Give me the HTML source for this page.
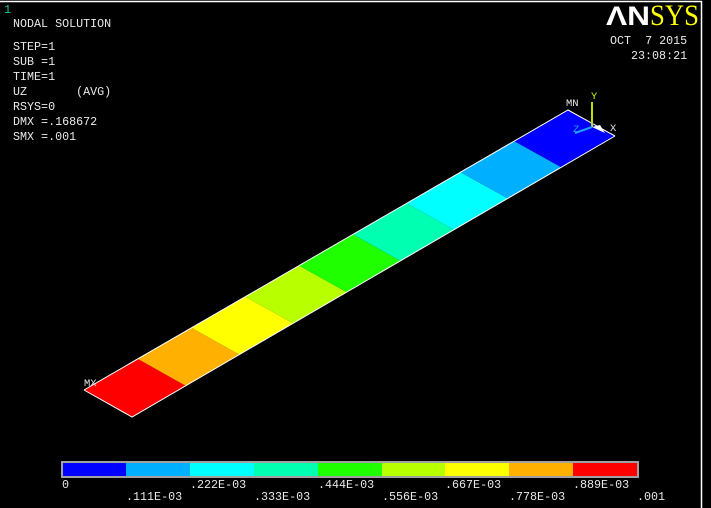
<!DOCTYPE html>
<html><head><meta charset="utf-8"><style>
html,body{margin:0;padding:0;background:#000;width:711px;height:508px;overflow:hidden}
svg text{font-family:"Liberation Mono",monospace;font-size:11.7px;fill:#e8e8e8;white-space:pre}
</style></head><body>
<svg width="711" height="508" viewBox="0 0 711 508" xml:space="preserve">
<rect width="711" height="508" fill="#000"/>
<line x1="0" y1="1.5" x2="702" y2="1.5" stroke="#fff" stroke-width="1.5"/>
<line x1="701.5" y1="1" x2="701.5" y2="508" stroke="#fff" stroke-width="1.5"/>
<text x="4" y="13" style="fill:#20c0a0;font-size:12px">1</text>
<text x="13" y="27">NODAL SOLUTION</text>
<text x="13" y="50">STEP=1</text>
<text x="13" y="65">SUB =1</text>
<text x="13" y="80">TIME=1</text>
<text x="13" y="95">UZ       (AVG)</text>
<text x="13" y="110">RSYS=0</text>
<text x="13" y="125">DMX =.168672</text>
<text x="13" y="140">SMX =.001</text>
<text x="606" y="25" textLength="44" lengthAdjust="spacingAndGlyphs" style="font-family:'Liberation Sans',sans-serif;font-weight:bold;font-size:27px;fill:#fff">ΛN</text>
<text x="650" y="25" textLength="49" lengthAdjust="spacingAndGlyphs" style="font-family:'Liberation Serif',serif;font-size:30px;fill:#ffff00">SYS</text>
<text x="610" y="44">OCT  7 2015</text>
<text x="631" y="59">23:08:21</text>
<polygon points="84,390 137.8,358.9 185.7,385.8 132,417" fill="#ff0000"/>
<polygon points="137.8,358.9 191.6,327.8 239.3,354.6 185.7,385.8" fill="#ffb000"/>
<polygon points="191.6,327.8 245.3,296.7 293,323.3 239.3,354.6" fill="#ffff00"/>
<polygon points="245.3,296.7 299.1,265.6 346.7,292.1 293,323.3" fill="#b8ff00"/>
<polygon points="299.1,265.6 352.9,234.4 400.3,260.9 346.7,292.1" fill="#20ff00"/>
<polygon points="352.9,234.4 406.7,203.3 454,229.7 400.3,260.9" fill="#00ffb0"/>
<polygon points="406.7,203.3 460.4,172.2 507.7,198.4 454,229.7" fill="#00ffff"/>
<polygon points="460.4,172.2 514.2,141.1 561.3,167.2 507.7,198.4" fill="#00b0ff"/>
<polygon points="514.2,141.1 568,110 615,136 561.3,167.2" fill="#0000ff"/>
<polyline points="84,390 132,417 615,136" fill="none" stroke="#fff" stroke-width="1"/>
<polyline points="84,390 568,110 615,136" fill="none" stroke="#fff" stroke-width="1"/>
<polygon points="592,127 600,125 605,133" fill="#fff"/>
<line x1="592" y1="127" x2="592" y2="102" stroke="#c0e000" stroke-width="2"/>
<line x1="592" y1="127" x2="575" y2="133" stroke="#20a0ff" stroke-width="2"/>
<text x="566" y="106" style="font-size:10.5px">MN</text>
<text x="591" y="99" style="fill:#c0ff00;font-size:10.5px">Y</text>
<text x="573" y="132" style="fill:#20a0ff;font-size:10.5px">Z</text>
<text x="610" y="131" style="font-size:10.5px">X</text>
<text x="84" y="386" style="font-size:10.5px">MX</text>
<rect x="61" y="461" width="578" height="17" fill="#a0a0a0"/>
<rect x="63" y="463" width="63" height="13" fill="#0000ff"/>
<rect x="126" y="463" width="64" height="13" fill="#00b0ff"/>
<rect x="190" y="463" width="64" height="13" fill="#00ffff"/>
<rect x="254" y="463" width="64" height="13" fill="#00ffb0"/>
<rect x="318" y="463" width="64" height="13" fill="#20ff00"/>
<rect x="382" y="463" width="63" height="13" fill="#b8ff00"/>
<rect x="445" y="463" width="64" height="13" fill="#ffff00"/>
<rect x="509" y="463" width="64" height="13" fill="#ffb000"/>
<rect x="573" y="463" width="64" height="13" fill="#ff0000"/>
<text x="62" y="488">0</text>
<text x="190" y="488">.222E-03</text>
<text x="318" y="488">.444E-03</text>
<text x="445" y="488">.667E-03</text>
<text x="573" y="488">.889E-03</text>
<text x="126" y="500">.111E-03</text>
<text x="254" y="500">.333E-03</text>
<text x="382" y="500">.556E-03</text>
<text x="509" y="500">.778E-03</text>
<text x="637" y="500">.001</text>
</svg>
</body></html>
